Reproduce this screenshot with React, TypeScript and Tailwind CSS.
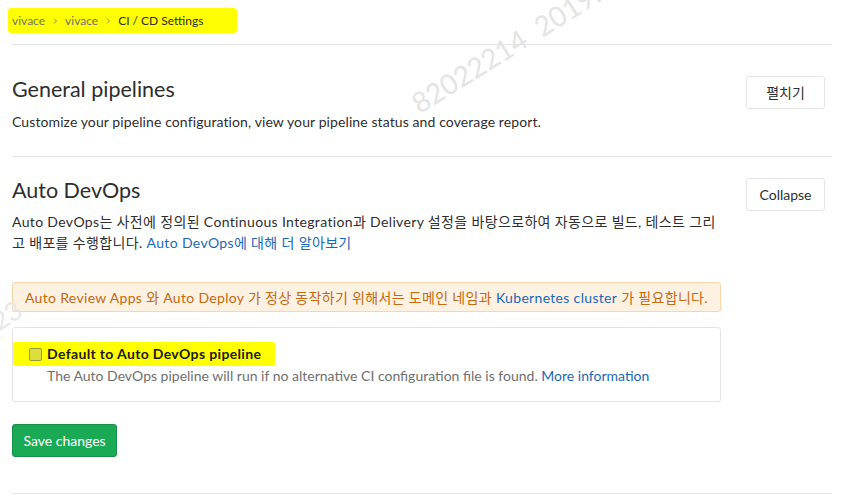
import React from "react";

const font = {
  fontFamily: '"Segoe UI", Lato, "Noto Sans CJK KR", sans-serif',
};

function Chevron() {
  return (
    <svg width="8" height="8" viewBox="0 0 8 8" className="mx-[6px]" fill="none">
      <path d="M3 1.5 L5.5 4 L3 6.5" stroke="#8a8a8a" strokeWidth="1" />
    </svg>
  );
}

export default function App() {
  return (
    <div
      className="relative w-[848px] h-[499px] overflow-hidden bg-white text-[#2e2e2e]"
      style={font}
    >
      <div className="pl-[12px] w-[832px]">
        {/* breadcrumb */}
        <div className="h-[45px] border-b border-[#e5e5e5] flex items-start pt-[8px]">
          <span className="flex items-center h-[25px] bg-[#ffff00] ml-[-4px] pl-[4px] pr-[34px] text-[12px] text-[#707070] rounded-[3px]">
            <span>vivace</span>
            <Chevron />
            <span>vivace</span>
            <Chevron />
            <span className="text-[#2e2e2e]">CI / CD Settings</span>
          </span>
        </div>

        {/* General pipelines */}
        <div className="border-b border-[#e5e5e5] pt-[30px] pb-[24px]">
          <div className="flex justify-between items-start">
            <div>
              <h4 className="text-[21.5px] leading-[28px] font-normal">General pipelines</h4>
              <p className="text-[14px] leading-[20px] mt-[9px] tracking-[0.1px]">
                Customize your pipeline configuration, view your pipeline status and coverage report.
              </p>
            </div>
            <button className="mr-[7px] mt-[1px] h-[33px] w-[79px] border border-[#e5e5e5] rounded-[3px] bg-white text-[14px] text-[#2e2e2e]">
              펼치기
            </button>
          </div>
        </div>

        {/* Auto DevOps */}
        <div className="pt-[19px]">
          <div className="flex justify-between items-start">
            <div>
              <h4 className="text-[21.5px] leading-[28px] font-normal">Auto DevOps</h4>
              <p className="text-[14px] leading-[21px] mt-[7px] w-[725px] tracking-[0.35px] whitespace-nowrap">
                Auto DevOps는 사전에 정의된 Continuous Integration과 Delivery 설정을 바탕으로하여 자동으로 빌드, 테스트 그리
                <br />
                고 배포를 수행합니다.{" "}
                <span className="text-[#1b69b6]">Auto DevOps에 대해 더 알아보기</span>
              </p>
            </div>
            <button className="mr-[7px] mt-[2px] h-[33px] w-[79px] border border-[#e5e5e5] rounded-[3px] bg-white text-[14px] text-[#2e2e2e] shrink-0">
              Collapse
            </button>
          </div>

          <div className="mt-[29px] w-[709px] h-[30px] flex items-center px-[12px] bg-[#fdf1e2] border border-[#f8d6a8] rounded-[3px] text-[14px] text-[#c26a12] tracking-[0.32px] whitespace-nowrap">
            Auto Review Apps 와 Auto Deploy 가 정상 동작하기 위해서는 도메인 네임과{" "}
            <span className="text-[#1b69b6] mx-[4px]">Kubernetes cluster</span> 가 필요합니다.
          </div>

          <div className="mt-[15px] w-[709px] border border-[#e5e5e5] rounded-[3px] pt-[16px] pb-[15px] pl-[16px]">
            <div className="flex">
              <span className="flex items-center h-[24px] mt-[-2px] bg-[#ffff00] ml-[-16px] pl-[16px] pr-[14px] rounded-[2px]">
                <span className="w-[13px] h-[13px] border border-[#9a9a3a] bg-[#dede3a] rounded-[2px]" />
                <span className="ml-[5px] text-[14px] leading-[20px] font-bold text-[#1a1a1a] tracking-[0.35px]">
                  Default to Auto DevOps pipeline
                </span>
              </span>
            </div>
            <p className="ml-[18px] mt-[0px] text-[14px] leading-[20px] text-[#707070]">
              The Auto DevOps pipeline will run if no alternative CI configuration file is found.{" "}
              <span className="text-[#1b69b6]">More information</span>
            </p>
          </div>

          <button className="mt-[22px] h-[33px] w-[105px] bg-[#1aaa55] border border-[#168f48] rounded-[3px] text-white text-[14px]">
            Save changes
          </button>

          <div className="mt-[36px] border-b border-[#e5e5e5]" />
        </div>
      </div>

      {/* watermark */}
      <div
        className="pointer-events-none absolute left-[414px] top-[84px] text-[28px] text-[#e4e4e4] whitespace-nowrap origin-left -rotate-[32deg]"
        style={{ fontFamily: "Lato, sans-serif" }}
      >
        82022214&nbsp;&nbsp;2019.06
      </div>
      <div
        className="pointer-events-none absolute left-[-6px] top-[304px] text-[26px] text-[#e8e8e8] whitespace-nowrap origin-left -rotate-[33deg]"
        style={{ fontFamily: "Lato, sans-serif" }}
      >
        23
      </div>
    </div>
  );
}
